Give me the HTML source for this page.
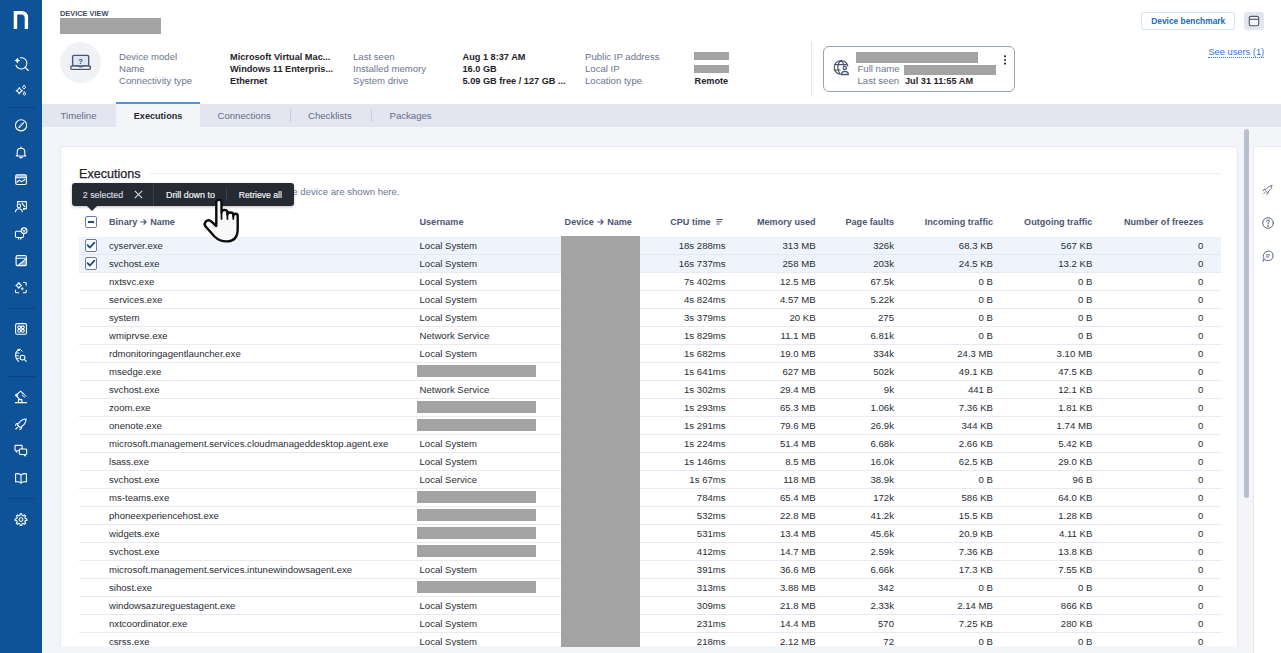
<!DOCTYPE html>
<html><head><meta charset="utf-8"><title>Device view</title>
<style>
html,body{margin:0;padding:0;}
body{width:1281px;height:653px;position:relative;overflow:hidden;background:#f4f5f9;font-family:"Liberation Sans", sans-serif;}
.t{position:absolute;white-space:nowrap;line-height:1;}
</style></head><body>
<div style="position:absolute;left:42px;top:0px;width:1239px;height:104px;background:#fff;"></div><div style="position:absolute;left:42px;top:104px;width:1239px;height:23px;background:#e3e6f0;"></div><div style="position:absolute;left:42px;top:127px;width:1239px;height:526px;background:#f4f5f9;"></div><div class="t" style="left:60px;top:10.19px;font-size:7.4px;font-weight:700;color:#3d4a68;">DEVICE VIEW</div><div style="position:absolute;left:60px;top:18px;width:101px;height:16px;background:#a3a3a3;"></div><div style="position:absolute;left:60px;top:42px;width:41px;height:41px;background:#f1f2f6;border-radius:50%;"></div><svg style="position:absolute;left:69px;top:53px" width="24" height="19" viewBox="0 0 24 19">
<rect x="3.6" y="2.4" width="16.1" height="10.6" rx="1.3" fill="#dbe8f4" stroke="#4a5571" stroke-width="1.35"/>
<path d="M1.9 13.1 H8.8 Q11.65 14.6 14.5 13.1 H21.35 V15.2 Q21.35 16.4 20.1 16.4 H3.1 Q1.9 16.4 1.9 15.2 Z" fill="#fff" stroke="#4a5571" stroke-width="1.35" stroke-linejoin="round"/>
<text x="11.65" y="10.6" font-family="Liberation Sans" font-weight="700" font-size="7.5" fill="#3c465e" text-anchor="middle">?</text>
</svg><div class="t" style="left:119px;top:52.32px;font-size:9.6px;font-weight:400;color:#6b7591;">Device model</div><div class="t" style="left:119px;top:64.32px;font-size:9.6px;font-weight:400;color:#6b7591;">Name</div><div class="t" style="left:119px;top:76.32px;font-size:9.6px;font-weight:400;color:#6b7591;">Connectivity type</div><div class="t" style="left:230px;top:52.66px;font-size:9.2px;font-weight:700;color:#1f232b;">Microsoft Virtual Mac...</div><div class="t" style="left:230px;top:64.66px;font-size:9.2px;font-weight:700;color:#1f232b;">Windows 11 Enterpris...</div><div class="t" style="left:230px;top:76.66px;font-size:9.2px;font-weight:700;color:#1f232b;">Ethernet</div><div class="t" style="left:353px;top:52.32px;font-size:9.6px;font-weight:400;color:#6b7591;">Last seen</div><div class="t" style="left:353px;top:64.32px;font-size:9.6px;font-weight:400;color:#6b7591;">Installed memory</div><div class="t" style="left:353px;top:76.32px;font-size:9.6px;font-weight:400;color:#6b7591;">System drive</div><div class="t" style="left:462.5px;top:52.66px;font-size:9.2px;font-weight:700;color:#1f232b;">Aug 1 8:37 AM</div><div class="t" style="left:462.5px;top:64.66px;font-size:9.2px;font-weight:700;color:#1f232b;">16.0 GB</div><div class="t" style="left:462.5px;top:76.66px;font-size:9.2px;font-weight:700;color:#1f232b;">5.09 GB free / 127 GB ...</div><div class="t" style="left:585px;top:52.32px;font-size:9.6px;font-weight:400;color:#6b7591;">Public IP address</div><div class="t" style="left:585px;top:64.32px;font-size:9.6px;font-weight:400;color:#6b7591;">Local IP</div><div class="t" style="left:585px;top:76.32px;font-size:9.6px;font-weight:400;color:#6b7591;">Location type</div><div style="position:absolute;left:694px;top:52px;width:35px;height:8px;background:#a3a3a3;"></div><div style="position:absolute;left:694px;top:65px;width:35px;height:8px;background:#a3a3a3;"></div><div class="t" style="left:694.5px;top:76.66px;font-size:9.2px;font-weight:700;color:#1f232b;">Remote</div><div style="position:absolute;left:811px;top:42px;width:1px;height:54px;background:#e4e7ef;"></div><div style="position:absolute;left:823.2px;top:46.2px;width:190.3px;height:43.5px;border:1.6px solid #96a1b6;border-radius:6px;background:#fff;"></div><svg style="position:absolute;left:832px;top:59px" width="18" height="17" viewBox="0 0 18 17">
<g fill="none" stroke="#46526e" stroke-width="1.2" stroke-linecap="round">
<path d="M15.85 7.0 A6.9 6.9 0 1 0 7.7 15.2"/>
<path d="M9.2 1.6 Q5.8 4.2 5.8 8.4 Q5.8 12.2 8.2 14.8"/>
<path d="M8.8 1.6 Q11.6 3.6 12 6.2"/>
<path d="M2.6 5.6 H14.4 M2.4 11 H8.2"/>
<circle cx="12.8" cy="8.9" r="1.65" fill="#d8e8f5"/>
<path d="M9.4 15.6 Q9.4 12.3 12.9 12.3 Q16.4 12.3 16.4 15.6 Z" fill="#d8e8f5" stroke-linejoin="round"/>
</g></svg><div style="position:absolute;left:856px;top:52px;width:122px;height:10.5px;background:#a3a3a3;"></div><div class="t" style="left:857.5px;top:64.32px;font-size:9.6px;font-weight:400;color:#6b7591;">Full name</div><div style="position:absolute;left:904px;top:64.5px;width:92px;height:10.5px;background:#a3a3a3;"></div><div class="t" style="left:857.5px;top:76.32px;font-size:9.6px;font-weight:400;color:#6b7591;">Last seen</div><div class="t" style="left:905px;top:76.66px;font-size:9.2px;font-weight:700;color:#1f232b;">Jul 31 11:55 AM</div><svg style="position:absolute;left:1000px;top:50px" width="10" height="20" viewBox="0 0 10 20"><g fill="#262b36"><rect x="4.05" y="5.3" width="1.9" height="1.9" rx="0.5"/><rect x="4.05" y="8.95" width="1.9" height="1.9" rx="0.5"/><rect x="4.05" y="12.6" width="1.9" height="1.9" rx="0.5"/></g></svg><div style="position:absolute;left:1141px;top:12px;width:94px;height:18px;border:1px solid #d5e3f3;border-radius:3px;background:#fff;box-sizing:border-box;"></div><div class="t" style="left:1151.2px;top:17.34px;font-size:8.4px;font-weight:700;color:#2068c0;">Device benchmark</div><div style="position:absolute;left:1244px;top:12px;width:19.5px;height:18px;background:#e3e6f0;border-radius:3px;"></div><svg style="position:absolute;left:1248px;top:15px" width="12" height="12" viewBox="0 0 12 12">
<rect x="1.3" y="1.3" width="9.4" height="9.4" rx="1.6" fill="#f7f8fb" stroke="#555b6b" stroke-width="1.15"/>
<path d="M1.3 4.3 H10.7" stroke="#555b6b" stroke-width="1.15"/></svg><div class="t" style="left:1208.4px;top:47.58px;font-size:9.3px;font-weight:400;color:#2f78cc;border-bottom:1px dotted #2f78cc;line-height:1.05;">See users (1)</div><div style="position:absolute;left:115.5px;top:102px;width:84.5px;height:25px;background:#f4f5f9;border-top:2px solid #4a97e0;box-sizing:border-box;"></div><div class="t" style="left:60.6px;top:111.32px;font-size:9.6px;font-weight:400;color:#636d88;">Timeline</div><div class="t" style="left:133.8px;top:111.75px;font-size:9.1px;font-weight:700;color:#262a33;">Executions</div><div class="t" style="left:217.5px;top:111.32px;font-size:9.6px;font-weight:400;color:#636d88;">Connections</div><div style="position:absolute;left:290px;top:109px;width:1px;height:13px;background:#c9cedb;"></div><div class="t" style="left:308px;top:111.32px;font-size:9.6px;font-weight:400;color:#636d88;">Checklists</div><div style="position:absolute;left:371px;top:109px;width:1px;height:13px;background:#c9cedb;"></div><div class="t" style="left:389.5px;top:111.32px;font-size:9.6px;font-weight:400;color:#636d88;">Packages</div><div style="position:absolute;left:60px;top:146px;width:1178px;height:520px;background:#fff;border:1px solid #e8eaf0;border-radius:4px;box-sizing:border-box;"></div><div style="position:absolute;left:42px;top:646px;width:1196px;height:7px;background:#f4f5f9;"></div><div style="position:absolute;left:1244px;top:129px;width:5px;height:369px;background:#b9bfcc;border-radius:3px;"></div><div style="position:absolute;left:1253px;top:146px;width:28px;height:507px;background:#fff;border:1px solid #e8eaf0;border-right:none;border-bottom:none;border-radius:4px 0 0 0;box-sizing:border-box;"></div><div class="t" style="left:79px;top:167.78px;font-size:12.6px;font-weight:400;color:#1f232b;-webkit-text-stroke:0.25px #1f232b;">Executions</div><div style="position:absolute;left:149px;top:173px;width:1071px;height:1px;background:#eceef3;"></div><div class="t" style="right:881.5px;top:187.32px;font-size:9.6px;font-weight:400;color:#6b7591;">The executions of the device are shown here.</div><div style="position:absolute;left:0;top:0;width:1281px;height:646px;overflow:hidden;"><div style="position:absolute;left:79px;top:237px;width:1142px;height:17px;background:#eff4fc;"></div><div style="position:absolute;left:79px;top:254px;width:1142px;height:1px;background:#e3e8f1;"></div><div class="t" style="left:109px;top:241.32px;font-size:9.6px;font-weight:400;color:#2a2d34;">cyserver.exe</div><div class="t" style="left:419.5px;top:241.32px;font-size:9.6px;font-weight:400;color:#2a2d34;">Local System</div><div class="t" style="right:555.4px;top:241.32px;font-size:9.6px;font-weight:400;color:#2a2d34;">18s 288ms</div><div class="t" style="right:465.4px;top:241.32px;font-size:9.6px;font-weight:400;color:#2a2d34;">313 MB</div><div class="t" style="right:387px;top:241.32px;font-size:9.6px;font-weight:400;color:#2a2d34;">326k</div><div class="t" style="right:288px;top:241.32px;font-size:9.6px;font-weight:400;color:#2a2d34;">68.3 KB</div><div class="t" style="right:188.70000000000005px;top:241.32px;font-size:9.6px;font-weight:400;color:#2a2d34;">567 KB</div><div class="t" style="right:77.70000000000005px;top:241.32px;font-size:9.6px;font-weight:400;color:#2a2d34;">0</div><div style="position:absolute;left:79px;top:255px;width:1142px;height:17px;background:#eff4fc;"></div><div style="position:absolute;left:79px;top:272px;width:1142px;height:1px;background:#e8eaf1;"></div><div class="t" style="left:109px;top:259.32px;font-size:9.6px;font-weight:400;color:#2a2d34;">svchost.exe</div><div class="t" style="left:419.5px;top:259.32px;font-size:9.6px;font-weight:400;color:#2a2d34;">Local System</div><div class="t" style="right:555.4px;top:259.32px;font-size:9.6px;font-weight:400;color:#2a2d34;">16s 737ms</div><div class="t" style="right:465.4px;top:259.32px;font-size:9.6px;font-weight:400;color:#2a2d34;">258 MB</div><div class="t" style="right:387px;top:259.32px;font-size:9.6px;font-weight:400;color:#2a2d34;">203k</div><div class="t" style="right:288px;top:259.32px;font-size:9.6px;font-weight:400;color:#2a2d34;">24.5 KB</div><div class="t" style="right:188.70000000000005px;top:259.32px;font-size:9.6px;font-weight:400;color:#2a2d34;">13.2 KB</div><div class="t" style="right:77.70000000000005px;top:259.32px;font-size:9.6px;font-weight:400;color:#2a2d34;">0</div><div style="position:absolute;left:79px;top:290px;width:1142px;height:1px;background:#e8eaf1;"></div><div class="t" style="left:109px;top:277.32px;font-size:9.6px;font-weight:400;color:#2a2d34;">nxtsvc.exe</div><div class="t" style="left:419.5px;top:277.32px;font-size:9.6px;font-weight:400;color:#2a2d34;">Local System</div><div class="t" style="right:555.4px;top:277.32px;font-size:9.6px;font-weight:400;color:#2a2d34;">7s 402ms</div><div class="t" style="right:465.4px;top:277.32px;font-size:9.6px;font-weight:400;color:#2a2d34;">12.5 MB</div><div class="t" style="right:387px;top:277.32px;font-size:9.6px;font-weight:400;color:#2a2d34;">67.5k</div><div class="t" style="right:288px;top:277.32px;font-size:9.6px;font-weight:400;color:#2a2d34;">0 B</div><div class="t" style="right:188.70000000000005px;top:277.32px;font-size:9.6px;font-weight:400;color:#2a2d34;">0 B</div><div class="t" style="right:77.70000000000005px;top:277.32px;font-size:9.6px;font-weight:400;color:#2a2d34;">0</div><div style="position:absolute;left:79px;top:308px;width:1142px;height:1px;background:#e8eaf1;"></div><div class="t" style="left:109px;top:295.32px;font-size:9.6px;font-weight:400;color:#2a2d34;">services.exe</div><div class="t" style="left:419.5px;top:295.32px;font-size:9.6px;font-weight:400;color:#2a2d34;">Local System</div><div class="t" style="right:555.4px;top:295.32px;font-size:9.6px;font-weight:400;color:#2a2d34;">4s 824ms</div><div class="t" style="right:465.4px;top:295.32px;font-size:9.6px;font-weight:400;color:#2a2d34;">4.57 MB</div><div class="t" style="right:387px;top:295.32px;font-size:9.6px;font-weight:400;color:#2a2d34;">5.22k</div><div class="t" style="right:288px;top:295.32px;font-size:9.6px;font-weight:400;color:#2a2d34;">0 B</div><div class="t" style="right:188.70000000000005px;top:295.32px;font-size:9.6px;font-weight:400;color:#2a2d34;">0 B</div><div class="t" style="right:77.70000000000005px;top:295.32px;font-size:9.6px;font-weight:400;color:#2a2d34;">0</div><div style="position:absolute;left:79px;top:326px;width:1142px;height:1px;background:#e8eaf1;"></div><div class="t" style="left:109px;top:313.32px;font-size:9.6px;font-weight:400;color:#2a2d34;">system</div><div class="t" style="left:419.5px;top:313.32px;font-size:9.6px;font-weight:400;color:#2a2d34;">Local System</div><div class="t" style="right:555.4px;top:313.32px;font-size:9.6px;font-weight:400;color:#2a2d34;">3s 379ms</div><div class="t" style="right:465.4px;top:313.32px;font-size:9.6px;font-weight:400;color:#2a2d34;">20 KB</div><div class="t" style="right:387px;top:313.32px;font-size:9.6px;font-weight:400;color:#2a2d34;">275</div><div class="t" style="right:288px;top:313.32px;font-size:9.6px;font-weight:400;color:#2a2d34;">0 B</div><div class="t" style="right:188.70000000000005px;top:313.32px;font-size:9.6px;font-weight:400;color:#2a2d34;">0 B</div><div class="t" style="right:77.70000000000005px;top:313.32px;font-size:9.6px;font-weight:400;color:#2a2d34;">0</div><div style="position:absolute;left:79px;top:344px;width:1142px;height:1px;background:#e8eaf1;"></div><div class="t" style="left:109px;top:331.32px;font-size:9.6px;font-weight:400;color:#2a2d34;">wmiprvse.exe</div><div class="t" style="left:419.5px;top:331.32px;font-size:9.6px;font-weight:400;color:#2a2d34;">Network Service</div><div class="t" style="right:555.4px;top:331.32px;font-size:9.6px;font-weight:400;color:#2a2d34;">1s 829ms</div><div class="t" style="right:465.4px;top:331.32px;font-size:9.6px;font-weight:400;color:#2a2d34;">11.1 MB</div><div class="t" style="right:387px;top:331.32px;font-size:9.6px;font-weight:400;color:#2a2d34;">6.81k</div><div class="t" style="right:288px;top:331.32px;font-size:9.6px;font-weight:400;color:#2a2d34;">0 B</div><div class="t" style="right:188.70000000000005px;top:331.32px;font-size:9.6px;font-weight:400;color:#2a2d34;">0 B</div><div class="t" style="right:77.70000000000005px;top:331.32px;font-size:9.6px;font-weight:400;color:#2a2d34;">0</div><div style="position:absolute;left:79px;top:362px;width:1142px;height:1px;background:#e8eaf1;"></div><div class="t" style="left:109px;top:349.32px;font-size:9.6px;font-weight:400;color:#2a2d34;">rdmonitoringagentlauncher.exe</div><div class="t" style="left:419.5px;top:349.32px;font-size:9.6px;font-weight:400;color:#2a2d34;">Local System</div><div class="t" style="right:555.4px;top:349.32px;font-size:9.6px;font-weight:400;color:#2a2d34;">1s 682ms</div><div class="t" style="right:465.4px;top:349.32px;font-size:9.6px;font-weight:400;color:#2a2d34;">19.0 MB</div><div class="t" style="right:387px;top:349.32px;font-size:9.6px;font-weight:400;color:#2a2d34;">334k</div><div class="t" style="right:288px;top:349.32px;font-size:9.6px;font-weight:400;color:#2a2d34;">24.3 MB</div><div class="t" style="right:188.70000000000005px;top:349.32px;font-size:9.6px;font-weight:400;color:#2a2d34;">3.10 MB</div><div class="t" style="right:77.70000000000005px;top:349.32px;font-size:9.6px;font-weight:400;color:#2a2d34;">0</div><div style="position:absolute;left:79px;top:380px;width:1142px;height:1px;background:#e8eaf1;"></div><div class="t" style="left:109px;top:367.32px;font-size:9.6px;font-weight:400;color:#2a2d34;">msedge.exe</div><div style="position:absolute;left:417px;top:364.5px;width:118.5px;height:12.5px;background:#a3a3a3;"></div><div class="t" style="right:555.4px;top:367.32px;font-size:9.6px;font-weight:400;color:#2a2d34;">1s 641ms</div><div class="t" style="right:465.4px;top:367.32px;font-size:9.6px;font-weight:400;color:#2a2d34;">627 MB</div><div class="t" style="right:387px;top:367.32px;font-size:9.6px;font-weight:400;color:#2a2d34;">502k</div><div class="t" style="right:288px;top:367.32px;font-size:9.6px;font-weight:400;color:#2a2d34;">49.1 KB</div><div class="t" style="right:188.70000000000005px;top:367.32px;font-size:9.6px;font-weight:400;color:#2a2d34;">47.5 KB</div><div class="t" style="right:77.70000000000005px;top:367.32px;font-size:9.6px;font-weight:400;color:#2a2d34;">0</div><div style="position:absolute;left:79px;top:398px;width:1142px;height:1px;background:#e8eaf1;"></div><div class="t" style="left:109px;top:385.32px;font-size:9.6px;font-weight:400;color:#2a2d34;">svchost.exe</div><div class="t" style="left:419.5px;top:385.32px;font-size:9.6px;font-weight:400;color:#2a2d34;">Network Service</div><div class="t" style="right:555.4px;top:385.32px;font-size:9.6px;font-weight:400;color:#2a2d34;">1s 302ms</div><div class="t" style="right:465.4px;top:385.32px;font-size:9.6px;font-weight:400;color:#2a2d34;">29.4 MB</div><div class="t" style="right:387px;top:385.32px;font-size:9.6px;font-weight:400;color:#2a2d34;">9k</div><div class="t" style="right:288px;top:385.32px;font-size:9.6px;font-weight:400;color:#2a2d34;">441 B</div><div class="t" style="right:188.70000000000005px;top:385.32px;font-size:9.6px;font-weight:400;color:#2a2d34;">12.1 KB</div><div class="t" style="right:77.70000000000005px;top:385.32px;font-size:9.6px;font-weight:400;color:#2a2d34;">0</div><div style="position:absolute;left:79px;top:416px;width:1142px;height:1px;background:#e8eaf1;"></div><div class="t" style="left:109px;top:403.32px;font-size:9.6px;font-weight:400;color:#2a2d34;">zoom.exe</div><div style="position:absolute;left:417px;top:400.5px;width:118.5px;height:12.5px;background:#a3a3a3;"></div><div class="t" style="right:555.4px;top:403.32px;font-size:9.6px;font-weight:400;color:#2a2d34;">1s 293ms</div><div class="t" style="right:465.4px;top:403.32px;font-size:9.6px;font-weight:400;color:#2a2d34;">65.3 MB</div><div class="t" style="right:387px;top:403.32px;font-size:9.6px;font-weight:400;color:#2a2d34;">1.06k</div><div class="t" style="right:288px;top:403.32px;font-size:9.6px;font-weight:400;color:#2a2d34;">7.36 KB</div><div class="t" style="right:188.70000000000005px;top:403.32px;font-size:9.6px;font-weight:400;color:#2a2d34;">1.81 KB</div><div class="t" style="right:77.70000000000005px;top:403.32px;font-size:9.6px;font-weight:400;color:#2a2d34;">0</div><div style="position:absolute;left:79px;top:434px;width:1142px;height:1px;background:#e8eaf1;"></div><div class="t" style="left:109px;top:421.32px;font-size:9.6px;font-weight:400;color:#2a2d34;">onenote.exe</div><div style="position:absolute;left:417px;top:418.5px;width:118.5px;height:12.5px;background:#a3a3a3;"></div><div class="t" style="right:555.4px;top:421.32px;font-size:9.6px;font-weight:400;color:#2a2d34;">1s 291ms</div><div class="t" style="right:465.4px;top:421.32px;font-size:9.6px;font-weight:400;color:#2a2d34;">79.6 MB</div><div class="t" style="right:387px;top:421.32px;font-size:9.6px;font-weight:400;color:#2a2d34;">26.9k</div><div class="t" style="right:288px;top:421.32px;font-size:9.6px;font-weight:400;color:#2a2d34;">344 KB</div><div class="t" style="right:188.70000000000005px;top:421.32px;font-size:9.6px;font-weight:400;color:#2a2d34;">1.74 MB</div><div class="t" style="right:77.70000000000005px;top:421.32px;font-size:9.6px;font-weight:400;color:#2a2d34;">0</div><div style="position:absolute;left:79px;top:452px;width:1142px;height:1px;background:#e8eaf1;"></div><div class="t" style="left:109px;top:439.32px;font-size:9.6px;font-weight:400;color:#2a2d34;">microsoft.management.services.cloudmanageddesktop.agent.exe</div><div class="t" style="left:419.5px;top:439.32px;font-size:9.6px;font-weight:400;color:#2a2d34;">Local System</div><div class="t" style="right:555.4px;top:439.32px;font-size:9.6px;font-weight:400;color:#2a2d34;">1s 224ms</div><div class="t" style="right:465.4px;top:439.32px;font-size:9.6px;font-weight:400;color:#2a2d34;">51.4 MB</div><div class="t" style="right:387px;top:439.32px;font-size:9.6px;font-weight:400;color:#2a2d34;">6.68k</div><div class="t" style="right:288px;top:439.32px;font-size:9.6px;font-weight:400;color:#2a2d34;">2.66 KB</div><div class="t" style="right:188.70000000000005px;top:439.32px;font-size:9.6px;font-weight:400;color:#2a2d34;">5.42 KB</div><div class="t" style="right:77.70000000000005px;top:439.32px;font-size:9.6px;font-weight:400;color:#2a2d34;">0</div><div style="position:absolute;left:79px;top:470px;width:1142px;height:1px;background:#e8eaf1;"></div><div class="t" style="left:109px;top:457.32px;font-size:9.6px;font-weight:400;color:#2a2d34;">lsass.exe</div><div class="t" style="left:419.5px;top:457.32px;font-size:9.6px;font-weight:400;color:#2a2d34;">Local System</div><div class="t" style="right:555.4px;top:457.32px;font-size:9.6px;font-weight:400;color:#2a2d34;">1s 146ms</div><div class="t" style="right:465.4px;top:457.32px;font-size:9.6px;font-weight:400;color:#2a2d34;">8.5 MB</div><div class="t" style="right:387px;top:457.32px;font-size:9.6px;font-weight:400;color:#2a2d34;">16.0k</div><div class="t" style="right:288px;top:457.32px;font-size:9.6px;font-weight:400;color:#2a2d34;">62.5 KB</div><div class="t" style="right:188.70000000000005px;top:457.32px;font-size:9.6px;font-weight:400;color:#2a2d34;">29.0 KB</div><div class="t" style="right:77.70000000000005px;top:457.32px;font-size:9.6px;font-weight:400;color:#2a2d34;">0</div><div style="position:absolute;left:79px;top:488px;width:1142px;height:1px;background:#e8eaf1;"></div><div class="t" style="left:109px;top:475.32px;font-size:9.6px;font-weight:400;color:#2a2d34;">svchost.exe</div><div class="t" style="left:419.5px;top:475.32px;font-size:9.6px;font-weight:400;color:#2a2d34;">Local Service</div><div class="t" style="right:555.4px;top:475.32px;font-size:9.6px;font-weight:400;color:#2a2d34;">1s 67ms</div><div class="t" style="right:465.4px;top:475.32px;font-size:9.6px;font-weight:400;color:#2a2d34;">118 MB</div><div class="t" style="right:387px;top:475.32px;font-size:9.6px;font-weight:400;color:#2a2d34;">38.9k</div><div class="t" style="right:288px;top:475.32px;font-size:9.6px;font-weight:400;color:#2a2d34;">0 B</div><div class="t" style="right:188.70000000000005px;top:475.32px;font-size:9.6px;font-weight:400;color:#2a2d34;">96 B</div><div class="t" style="right:77.70000000000005px;top:475.32px;font-size:9.6px;font-weight:400;color:#2a2d34;">0</div><div style="position:absolute;left:79px;top:506px;width:1142px;height:1px;background:#e8eaf1;"></div><div class="t" style="left:109px;top:493.32px;font-size:9.6px;font-weight:400;color:#2a2d34;">ms-teams.exe</div><div style="position:absolute;left:417px;top:490.5px;width:118.5px;height:12.5px;background:#a3a3a3;"></div><div class="t" style="right:555.4px;top:493.32px;font-size:9.6px;font-weight:400;color:#2a2d34;">784ms</div><div class="t" style="right:465.4px;top:493.32px;font-size:9.6px;font-weight:400;color:#2a2d34;">65.4 MB</div><div class="t" style="right:387px;top:493.32px;font-size:9.6px;font-weight:400;color:#2a2d34;">172k</div><div class="t" style="right:288px;top:493.32px;font-size:9.6px;font-weight:400;color:#2a2d34;">586 KB</div><div class="t" style="right:188.70000000000005px;top:493.32px;font-size:9.6px;font-weight:400;color:#2a2d34;">64.0 KB</div><div class="t" style="right:77.70000000000005px;top:493.32px;font-size:9.6px;font-weight:400;color:#2a2d34;">0</div><div style="position:absolute;left:79px;top:524px;width:1142px;height:1px;background:#e8eaf1;"></div><div class="t" style="left:109px;top:511.32px;font-size:9.6px;font-weight:400;color:#2a2d34;">phoneexperiencehost.exe</div><div style="position:absolute;left:417px;top:508.5px;width:118.5px;height:12.5px;background:#a3a3a3;"></div><div class="t" style="right:555.4px;top:511.32px;font-size:9.6px;font-weight:400;color:#2a2d34;">532ms</div><div class="t" style="right:465.4px;top:511.32px;font-size:9.6px;font-weight:400;color:#2a2d34;">22.8 MB</div><div class="t" style="right:387px;top:511.32px;font-size:9.6px;font-weight:400;color:#2a2d34;">41.2k</div><div class="t" style="right:288px;top:511.32px;font-size:9.6px;font-weight:400;color:#2a2d34;">15.5 KB</div><div class="t" style="right:188.70000000000005px;top:511.32px;font-size:9.6px;font-weight:400;color:#2a2d34;">1.28 KB</div><div class="t" style="right:77.70000000000005px;top:511.32px;font-size:9.6px;font-weight:400;color:#2a2d34;">0</div><div style="position:absolute;left:79px;top:542px;width:1142px;height:1px;background:#e8eaf1;"></div><div class="t" style="left:109px;top:529.32px;font-size:9.6px;font-weight:400;color:#2a2d34;">widgets.exe</div><div style="position:absolute;left:417px;top:526.5px;width:118.5px;height:12.5px;background:#a3a3a3;"></div><div class="t" style="right:555.4px;top:529.32px;font-size:9.6px;font-weight:400;color:#2a2d34;">531ms</div><div class="t" style="right:465.4px;top:529.32px;font-size:9.6px;font-weight:400;color:#2a2d34;">13.4 MB</div><div class="t" style="right:387px;top:529.32px;font-size:9.6px;font-weight:400;color:#2a2d34;">45.6k</div><div class="t" style="right:288px;top:529.32px;font-size:9.6px;font-weight:400;color:#2a2d34;">20.9 KB</div><div class="t" style="right:188.70000000000005px;top:529.32px;font-size:9.6px;font-weight:400;color:#2a2d34;">4.11 KB</div><div class="t" style="right:77.70000000000005px;top:529.32px;font-size:9.6px;font-weight:400;color:#2a2d34;">0</div><div style="position:absolute;left:79px;top:560px;width:1142px;height:1px;background:#e8eaf1;"></div><div class="t" style="left:109px;top:547.32px;font-size:9.6px;font-weight:400;color:#2a2d34;">svchost.exe</div><div style="position:absolute;left:417px;top:544.5px;width:118.5px;height:12.5px;background:#a3a3a3;"></div><div class="t" style="right:555.4px;top:547.32px;font-size:9.6px;font-weight:400;color:#2a2d34;">412ms</div><div class="t" style="right:465.4px;top:547.32px;font-size:9.6px;font-weight:400;color:#2a2d34;">14.7 MB</div><div class="t" style="right:387px;top:547.32px;font-size:9.6px;font-weight:400;color:#2a2d34;">2.59k</div><div class="t" style="right:288px;top:547.32px;font-size:9.6px;font-weight:400;color:#2a2d34;">7.36 KB</div><div class="t" style="right:188.70000000000005px;top:547.32px;font-size:9.6px;font-weight:400;color:#2a2d34;">13.8 KB</div><div class="t" style="right:77.70000000000005px;top:547.32px;font-size:9.6px;font-weight:400;color:#2a2d34;">0</div><div style="position:absolute;left:79px;top:578px;width:1142px;height:1px;background:#e8eaf1;"></div><div class="t" style="left:109px;top:565.32px;font-size:9.6px;font-weight:400;color:#2a2d34;">microsoft.management.services.intunewindowsagent.exe</div><div class="t" style="left:419.5px;top:565.32px;font-size:9.6px;font-weight:400;color:#2a2d34;">Local System</div><div class="t" style="right:555.4px;top:565.32px;font-size:9.6px;font-weight:400;color:#2a2d34;">391ms</div><div class="t" style="right:465.4px;top:565.32px;font-size:9.6px;font-weight:400;color:#2a2d34;">36.6 MB</div><div class="t" style="right:387px;top:565.32px;font-size:9.6px;font-weight:400;color:#2a2d34;">6.66k</div><div class="t" style="right:288px;top:565.32px;font-size:9.6px;font-weight:400;color:#2a2d34;">17.3 KB</div><div class="t" style="right:188.70000000000005px;top:565.32px;font-size:9.6px;font-weight:400;color:#2a2d34;">7.55 KB</div><div class="t" style="right:77.70000000000005px;top:565.32px;font-size:9.6px;font-weight:400;color:#2a2d34;">0</div><div style="position:absolute;left:79px;top:596px;width:1142px;height:1px;background:#e8eaf1;"></div><div class="t" style="left:109px;top:583.32px;font-size:9.6px;font-weight:400;color:#2a2d34;">sihost.exe</div><div style="position:absolute;left:417px;top:580.5px;width:118.5px;height:12.5px;background:#a3a3a3;"></div><div class="t" style="right:555.4px;top:583.32px;font-size:9.6px;font-weight:400;color:#2a2d34;">313ms</div><div class="t" style="right:465.4px;top:583.32px;font-size:9.6px;font-weight:400;color:#2a2d34;">3.88 MB</div><div class="t" style="right:387px;top:583.32px;font-size:9.6px;font-weight:400;color:#2a2d34;">342</div><div class="t" style="right:288px;top:583.32px;font-size:9.6px;font-weight:400;color:#2a2d34;">0 B</div><div class="t" style="right:188.70000000000005px;top:583.32px;font-size:9.6px;font-weight:400;color:#2a2d34;">0 B</div><div class="t" style="right:77.70000000000005px;top:583.32px;font-size:9.6px;font-weight:400;color:#2a2d34;">0</div><div style="position:absolute;left:79px;top:614px;width:1142px;height:1px;background:#e8eaf1;"></div><div class="t" style="left:109px;top:601.32px;font-size:9.6px;font-weight:400;color:#2a2d34;">windowsazureguestagent.exe</div><div class="t" style="left:419.5px;top:601.32px;font-size:9.6px;font-weight:400;color:#2a2d34;">Local System</div><div class="t" style="right:555.4px;top:601.32px;font-size:9.6px;font-weight:400;color:#2a2d34;">309ms</div><div class="t" style="right:465.4px;top:601.32px;font-size:9.6px;font-weight:400;color:#2a2d34;">21.8 MB</div><div class="t" style="right:387px;top:601.32px;font-size:9.6px;font-weight:400;color:#2a2d34;">2.33k</div><div class="t" style="right:288px;top:601.32px;font-size:9.6px;font-weight:400;color:#2a2d34;">2.14 MB</div><div class="t" style="right:188.70000000000005px;top:601.32px;font-size:9.6px;font-weight:400;color:#2a2d34;">866 KB</div><div class="t" style="right:77.70000000000005px;top:601.32px;font-size:9.6px;font-weight:400;color:#2a2d34;">0</div><div style="position:absolute;left:79px;top:632px;width:1142px;height:1px;background:#e8eaf1;"></div><div class="t" style="left:109px;top:619.32px;font-size:9.6px;font-weight:400;color:#2a2d34;">nxtcoordinator.exe</div><div class="t" style="left:419.5px;top:619.32px;font-size:9.6px;font-weight:400;color:#2a2d34;">Local System</div><div class="t" style="right:555.4px;top:619.32px;font-size:9.6px;font-weight:400;color:#2a2d34;">231ms</div><div class="t" style="right:465.4px;top:619.32px;font-size:9.6px;font-weight:400;color:#2a2d34;">14.4 MB</div><div class="t" style="right:387px;top:619.32px;font-size:9.6px;font-weight:400;color:#2a2d34;">570</div><div class="t" style="right:288px;top:619.32px;font-size:9.6px;font-weight:400;color:#2a2d34;">7.25 KB</div><div class="t" style="right:188.70000000000005px;top:619.32px;font-size:9.6px;font-weight:400;color:#2a2d34;">280 KB</div><div class="t" style="right:77.70000000000005px;top:619.32px;font-size:9.6px;font-weight:400;color:#2a2d34;">0</div><div style="position:absolute;left:79px;top:650px;width:1142px;height:1px;background:#e8eaf1;"></div><div class="t" style="left:109px;top:637.32px;font-size:9.6px;font-weight:400;color:#2a2d34;">csrss.exe</div><div class="t" style="left:419.5px;top:637.32px;font-size:9.6px;font-weight:400;color:#2a2d34;">Local System</div><div class="t" style="right:555.4px;top:637.32px;font-size:9.6px;font-weight:400;color:#2a2d34;">218ms</div><div class="t" style="right:465.4px;top:637.32px;font-size:9.6px;font-weight:400;color:#2a2d34;">2.12 MB</div><div class="t" style="right:387px;top:637.32px;font-size:9.6px;font-weight:400;color:#2a2d34;">72</div><div class="t" style="right:288px;top:637.32px;font-size:9.6px;font-weight:400;color:#2a2d34;">0 B</div><div class="t" style="right:188.70000000000005px;top:637.32px;font-size:9.6px;font-weight:400;color:#2a2d34;">0 B</div><div class="t" style="right:77.70000000000005px;top:637.32px;font-size:9.6px;font-weight:400;color:#2a2d34;">0</div></div><div style="position:absolute;left:561px;top:236px;width:79px;height:411px;background:#a3a3a3;"></div><div class="t" style="left:109px;top:217.75px;font-size:9.1px;font-weight:700;color:#4b5574;">Binary</div><div class="t" style="right:1106.1px;top:217.75px;font-size:9.1px;font-weight:700;color:#4b5574;">Name</div><svg style="position:absolute;left:139.7px;top:218.7px" width="7" height="6" viewBox="0 0 7 6"><path d="M0.3 3 H6.2 M3.6 0.5 L6.2 3 L3.6 5.5" fill="none" stroke="#4b5574" stroke-width="1.15"/></svg><div class="t" style="left:419.5px;top:217.75px;font-size:9.1px;font-weight:700;color:#4b5574;">Username</div><div class="t" style="left:564.6px;top:217.75px;font-size:9.1px;font-weight:700;color:#4b5574;">Device</div><div class="t" style="right:649.1px;top:217.75px;font-size:9.1px;font-weight:700;color:#4b5574;">Name</div><svg style="position:absolute;left:597.2px;top:218.7px" width="7" height="6" viewBox="0 0 7 6"><path d="M0.3 3 H6.2 M3.6 0.5 L6.2 3 L3.6 5.5" fill="none" stroke="#4b5574" stroke-width="1.15"/></svg><div class="t" style="left:670.2px;top:217.75px;font-size:9.1px;font-weight:700;color:#4b5574;">CPU time</div><svg style="position:absolute;left:716px;top:218px" width="8" height="8" viewBox="0 0 8 8">
<path d="M0.5 1.5 H7 M0.5 3.75 H5.6 M0.5 6 H3.6" stroke="#4b5574" stroke-width="1.05"/></svg><div class="t" style="right:465.4px;top:217.75px;font-size:9.1px;font-weight:700;color:#4b5574;">Memory used</div><div class="t" style="right:387px;top:217.75px;font-size:9.1px;font-weight:700;color:#4b5574;">Page faults</div><div class="t" style="right:288px;top:217.75px;font-size:9.1px;font-weight:700;color:#4b5574;">Incoming traffic</div><div class="t" style="right:188.70000000000005px;top:217.75px;font-size:9.1px;font-weight:700;color:#4b5574;">Outgoing traffic</div><div class="t" style="right:77.70000000000005px;top:217.75px;font-size:9.1px;font-weight:700;color:#4b5574;">Number of freezes</div><div style="position:absolute;left:84.5px;top:215.5px;width:12px;height:12px;border:1px solid #6f7b96;border-radius:2px;box-sizing:border-box;background:#fff;"></div><div style="position:absolute;left:87.5px;top:221px;width:6px;height:1.5px;background:#134a8c;"></div><div style="position:absolute;left:84.5px;top:239px;width:12px;height:12.5px;border:1px solid #6f7b96;border-radius:2px;box-sizing:border-box;background:#fff;"></div><svg style="position:absolute;left:84.5px;top:239px" width="12" height="12" viewBox="0 0 12 12">
<path d="M2.6 6.2 L4.9 8.5 L9.4 3.6" fill="none" stroke="#134a8c" stroke-width="1.8" stroke-linecap="round" stroke-linejoin="round"/></svg><div style="position:absolute;left:84.5px;top:257px;width:12px;height:12.5px;border:1px solid #6f7b96;border-radius:2px;box-sizing:border-box;background:#fff;"></div><svg style="position:absolute;left:84.5px;top:257px" width="12" height="12" viewBox="0 0 12 12">
<path d="M2.6 6.2 L4.9 8.5 L9.4 3.6" fill="none" stroke="#134a8c" stroke-width="1.8" stroke-linecap="round" stroke-linejoin="round"/></svg><div style="position:absolute;left:72px;top:183px;width:222px;height:23px;background:#252a33;border-radius:3px;box-shadow:0 1px 3px rgba(0,0,0,0.25);"></div><div style="position:absolute;left:86px;top:205px;width:0;height:0;border-left:6px solid transparent;border-right:6px solid transparent;border-top:6px solid #252a33;"></div><div style="position:absolute;left:153px;top:183px;width:1px;height:23px;background:#3b4049;"></div><div style="position:absolute;left:226px;top:188px;width:1px;height:13px;background:#3b4049;"></div><div class="t" style="left:82.8px;top:190.96px;font-size:8.85px;font-weight:400;color:#d9dce3;-webkit-text-stroke:0.15px #d9dce3;">2 selected</div><svg style="position:absolute;left:134px;top:189.8px" width="9" height="9" viewBox="0 0 9 9">
<path d="M0.8 0.8 L8.2 8.2 M8.2 0.8 L0.8 8.2" stroke="#d9dce3" stroke-width="1.1"/></svg><div class="t" style="left:166px;top:190.92px;font-size:8.9px;font-weight:400;color:#eef0f4;-webkit-text-stroke:0.2px #eef0f4;">Drill down to</div><div class="t" style="left:238.8px;top:191.13px;font-size:8.65px;font-weight:400;color:#eef0f4;-webkit-text-stroke:0.2px #eef0f4;">Retrieve all</div><svg style="position:absolute;left:195px;top:192px" width="50" height="56" viewBox="0 0 50 56">
<path d="M21.3 34 V10.3 Q21.3 7.9 23.9 7.9 Q26.5 7.9 26.5 10.3 V20.5 Q26.5 18 29.45 18 Q32.4 18 32.4 20.5 V22.5 Q32.4 20.5 35.35 20.5 Q38.3 20.5 38.3 22.8 V24 Q38.3 21.8 40.5 21.8 Q42.7 21.8 42.7 24 V37 Q42.7 49.4 31.5 49.4 Q24.5 49.4 19.5 44.5 L10.6 34.5 Q8.6 32 10.8 29.5 Q13.5 27 16.5 29.6 Z" fill="#f8f8f8" stroke="#0a0a0a" stroke-width="2.4" stroke-linejoin="round"/>
<path d="M26.5 20.5 V27.8 M32.4 22.5 V27.8 M38.3 24 V27.8" stroke="#0a0a0a" stroke-width="1.7"/>
</svg><div style="position:absolute;left:0px;top:0px;width:42px;height:653px;background:#0e5298;"></div><svg style="position:absolute;left:12px;top:10px" width="18" height="20" viewBox="0 0 18 20">
<path d="M1.7 19 V1 H9.5 Q16.1 1 16.1 7.6 V19 H12.7 V8.2 Q12.7 4.4 9.2 4.4 H5.2 V19 Z" fill="#fff"/></svg><div style="position:absolute;left:6px;top:107px;width:30px;height:1px;background:#0b4587;"></div><div style="position:absolute;left:6px;top:307.5px;width:30px;height:1px;background:#0b4587;"></div><div style="position:absolute;left:6px;top:375.5px;width:30px;height:1px;background:#0b4587;"></div><div style="position:absolute;left:6px;top:497.5px;width:30px;height:1px;background:#0b4587;"></div><svg style="position:absolute;left:0;top:0" width="42" height="653" viewBox="0 0 42 653"><g fill="none" stroke="#fff" stroke-width="1.1" stroke-linecap="round" stroke-linejoin="round">
<path d="M20.3 57.8 A5.6 5.6 0 1 1 16.0 65.2"/>
<path d="M25.3 67.5 L28.3 70.5"/>
<path d="M17.4 57.7 Q18.04 59.96 20.299999999999997 60.6 Q18.04 61.24 17.4 63.5 Q16.76 61.24 14.499999999999998 60.6 Q16.76 59.96 17.4 57.7 Z" fill="#fff" stroke="none"/>
<path d="M19.3 87.60000000000001 Q20.17 89.83 22.400000000000002 90.7 Q20.17 91.57 19.3 93.8 Q18.43 91.57 16.2 90.7 Q18.43 89.83 19.3 87.60000000000001 Z"/>
<path d="M24.1 85.5 Q24.64 86.76 25.900000000000002 87.3 Q24.64 87.84 24.1 89.1 Q23.56 87.84 22.3 87.3 Q23.56 86.76 24.1 85.5 Z" stroke-width="1"/>
<path d="M24.4 92.10000000000001 Q24.88 93.22 26.0 93.7 Q24.88 94.18 24.4 95.3 Q23.92 94.18 22.799999999999997 93.7 Q23.92 93.22 24.4 92.10000000000001 Z" stroke-width="1"/>
<circle cx="21.05" cy="125.3" r="5.6"/>
<path d="M23.5 122.85 Q22.3 123.4 21.05 124.3 Q19.7 125.6 18.6 127.75 Q20.3 127.2 21.05 126.3 Q22.6 124.9 23.5 122.85 Z" stroke-width="0.9"/>
<path d="M17.2 155.2 V151.9 Q17.2 148.3 21 148.3 Q24.8 148.3 24.8 151.9 V155.2 L25.7 156 H16.3 Z"/>
<path d="M21 147 V148.3"/>
<path d="M19.8 157.3 Q21 158.5 22.2 157.3" stroke-width="1.3"/>
<rect x="15.7" y="174.8" width="10.7" height="9.7" rx="1.4"/>
<rect x="15.7" y="174.8" width="10.7" height="2.9" fill="rgba(255,255,255,0.55)" stroke="none"/>
<path d="M15.7 177.7 H26.4"/>
<path d="M17 182.3 L19.3 180.1 L21.5 181.8 L24.9 179.5" stroke-width="1.2"/>
<path d="M17.5 203.2 V201.6 H26.4 V208.8 H24.2"/>
<circle cx="18.9" cy="205.8" r="1.8"/>
<path d="M15.5 211.8 Q15.8 208.7 18.9 208.7 Q22 208.7 22.3 211.8"/>
<path d="M22.2 203.4 L24.6 206.6"/>
<circle cx="23.9" cy="208.9" r="0.5" fill="#fff"/>
<path d="M21.2 231.3 H16.6 Q15.4 231.3 15.4 232.5 V236.3 Q15.4 237.5 16.6 237.5 H22.3 Q23.5 237.5 23.5 236.3 V234.6"/>
<path d="M17.9 238.7 H19.2 M20.2 238.7 H21.5" stroke-width="1.4" stroke-linecap="butt"/>
<circle cx="24.1" cy="230.8" r="2.9"/>
<path d="M24.1 230.9 V233.6 M24.1 230.9 L21.8 229.5 M24.1 230.9 L26.4 229.5" stroke-width="0.9"/>
<rect x="16.1" y="255.6" width="10.3" height="10" rx="1.3"/>
<path d="M16.1 258.3 H26.4"/>
<path d="M26.2 258.6 L26.2 265.6 L18.5 265.6 Z" fill="rgba(255,255,255,0.45)" stroke="none"/>
<path d="M26 258.8 L18 265.5"/>
<path d="M18.8 282.5 Q19.53 284.67 21.7 285.4 Q19.53 286.12 18.8 288.29999999999995 Q18.07 286.12 15.9 285.4 Q18.07 284.67 18.8 282.5 Z"/>
<path d="M22.3 287 L23.9 288.7 L22.3 290.4 L20.7 288.7 Z" fill="rgba(255,255,255,0.8)" stroke="none"/>
<path d="M23.3 282.5 H25.2 Q26.2 282.5 26.2 283.5 V285.3 M26.2 290.2 V291.8 Q26.2 292.8 25.2 292.8 H23.3 M18.7 292.8 H16.5 Q15.5 292.8 15.5 291.8 V290.2"/>
<rect x="15.6" y="323.6" width="10.9" height="10.7" rx="1.5"/>
<circle cx="19.25" cy="327.3" r="1.45"/><circle cx="22.85" cy="327.3" r="1.45"/>
<circle cx="19.25" cy="330.85" r="1.45"/><circle cx="22.85" cy="330.85" r="1.45"/>
<path d="M19.5 350.3 Q16 350.4 15.6 354.5 Q15.5 358.8 18.6 361.4"/>
<path d="M16.2 353 H19.2 M15.9 355.8 H18.6 M16.6 358.6 H18.8" stroke-width="0.9"/>
<path d="M17.8 349.3 Q20.6 348.2 22.4 351.2" stroke-width="1"/>
<circle cx="22.5" cy="357.6" r="2.4"/>
<path d="M24.3 359.4 L26.3 361.4"/>
<path d="M15.4 402.6 H26.6"/>
<path d="M18.4 402.6 V399.6 H21.9 V402.6"/>
<path d="M20 399.6 L16 395.3 L20.6 391.1 L23.3 393.6"/>
<path d="M23.3 393.6 L25.9 396.2 M22.2 395 L24.7 397.2" stroke-width="1"/>
<circle cx="16.6" cy="395.3" r="0.9" fill="#fff"/>
<path d="M26.1 419 Q21.6 419.1 19.1 422.7 L17.4 425 L20.1 427.6 L22.3 426 Q25.9 423.4 26.1 419 Z"/>
<path d="M18.4 423.5 L16.3 423.6 L15.6 425.4 M21.6 426.7 L21.5 428.8 L19.7 429.4"/>
<path d="M17.5 427.3 L15.8 429"/>
<path d="M15.8 445.4 H21.3 Q22.2 445.4 22.2 446.3 V448.7 M19.3 450.7 H17.6 L16.3 452.1 V450.7 H15.8 Q15 450.7 15 449.9 V446.3 Q15 445.4 15.8 445.4"/>
<path d="M20.2 449 H25.8 Q26.7 449 26.7 449.9 V453.6 Q26.7 454.5 25.8 454.5 H25.2 V456 L23.8 454.5 H20.2 Q19.3 454.5 19.3 453.6 V449.9 Q19.3 449 20.2 449 Z"/>
<path d="M21 474.9 Q18.6 473.2 15.6 473.7 V481.9 Q18.6 481.4 21 482.9 Q23.4 481.4 26.4 481.9 V473.7 Q23.4 473.2 21 474.9 Z"/>
<path d="M21 474.9 V482.9"/>
<path d="M25.30 518.66 L26.84 518.79 L26.84 520.41 L25.30 520.54 L24.71 521.97 L25.70 523.16 L24.56 524.30 L23.37 523.31 L21.94 523.90 L21.81 525.44 L20.19 525.44 L20.06 523.90 L18.63 523.31 L17.44 524.30 L16.30 523.16 L17.29 521.97 L16.70 520.54 L15.16 520.41 L15.16 518.79 L16.70 518.66 L17.29 517.23 L16.30 516.04 L17.44 514.90 L18.63 515.89 L20.06 515.30 L20.19 513.76 L21.81 513.76 L21.94 515.30 L23.37 515.89 L24.56 514.90 L25.70 516.04 L24.71 517.23 Z"/>
<circle cx="21" cy="519.6" r="1.9"/>
</g></svg><svg style="position:absolute;left:1261.75px;top:184.05px" width="11.5" height="11.5" viewBox="0 0 14 14"><g fill="none" stroke="#5a6580" stroke-width="1" stroke-linecap="round" stroke-linejoin="round"><path d="M12 2 Q8 2 5.5 5.5 L3.5 7.5 L6.5 10.5 L8.5 8.5 Q12 6 12 2Z"/><path d="M4.5 6.5 L2.5 6.5 L1.5 8.5 M7.5 9.5 L7.5 11.5 L5.5 12.5"/><path d="M4 10 L2 12"/></g></svg><svg style="position:absolute;left:1260.5px;top:215.6px" width="14" height="14" viewBox="0 0 14 14"><g fill="none" stroke="#5a6580" stroke-width="1" stroke-linecap="round" stroke-linejoin="round"><circle cx="7" cy="7" r="5.3"/><path d="M5.5 5.5 Q5.5 4 7 4 Q8.5 4 8.5 5.3 Q8.5 6.3 7 7 V8"/><circle cx="7" cy="10" r="0.3" fill="#5a6580"/></g></svg><svg style="position:absolute;left:1260.7px;top:248.5px" width="14" height="14" viewBox="0 0 14 14"><g fill="none" stroke="#5a6580" stroke-width="1" stroke-linecap="round" stroke-linejoin="round"><path d="M2 12 L3 9.5 Q1.8 7.5 2.5 5.5 Q4 2 7.5 2 Q12 2.3 12 7 Q11.8 11 7.5 11.5 Q5.5 11.8 4 10.8 Z"/><path d="M5.3 5.9 H9 M5.3 7.9 H7.8" stroke-width="0.9"/></g></svg>
</body></html>
